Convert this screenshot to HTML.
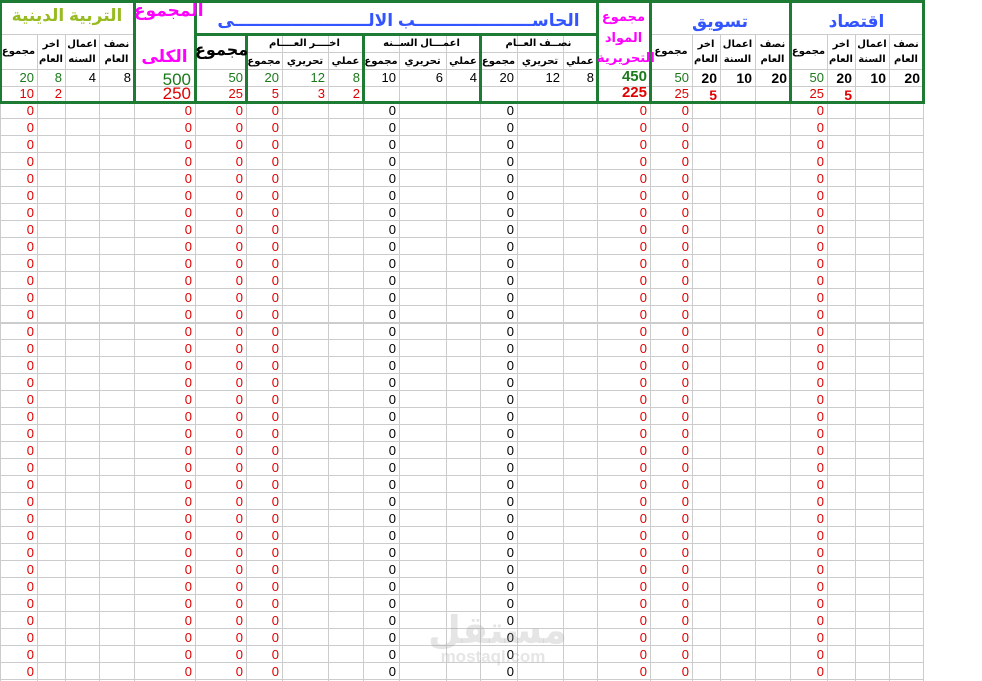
<!DOCTYPE html>
<html><head><meta charset="utf-8"><style>
body{margin:0;width:982px;height:681px;overflow:hidden;background:#fff;font-family:"Liberation Sans","DejaVu Sans",sans-serif;position:relative}
.l{position:absolute;background:#cccccc}
.g{position:absolute;background:#1e7b34}
.t{position:absolute;white-space:nowrap;line-height:1}
.c{position:absolute;text-align:center;font-weight:bold;font-size:10px;line-height:15px;direction:rtl}
</style></head><body>
<script>
const X=[0,37,65,99,134,195,246,282,328,363,399,446,480,517,563,597,650,692,720,755,790,827,855,889,923];
let h='';
function L(x,y,w,hh,cls){h+=`<div class="${cls||'l'}" style="left:${x}px;top:${y}px;width:${w}px;height:${hh}px"></div>`;}
function T(x,y,w,txt,st){h+=`<div class="t" style="left:${x}px;top:${y}px;width:${w}px;${st}">${txt}</div>`;}
for(const x of X){L(x,34,1,647);}
L(0,34,134,1);L(246,52,351,1);L(650,34,140,1);L(790,34,133,1);
L(0,69,923,1);L(0,86,923,1);
for(let k=1;k<=34;k++){let y=101+17*k;L(0,y,923,k==13?2:1);}
L(0,0,923,3,'g');L(0,101,923,3,'g');
for(const x of [0,134,195,597,650,790,923])L(x-1,0,3,104,'g');
for(const x of [246,363,480])L(x-1,34,3,70,'g');
L(195,33,402,3,'g');
T(0,7,134,'التربية الدينية','text-align:center;color:#99bb22;font-weight:bold;font-size:17px');
T(134,2,61,'المجموع','text-align:center;color:#ff00ff;font-weight:bold;font-size:17px');
T(134,48,61,'الكلى','text-align:center;color:#ff00ff;font-weight:bold;font-size:17px');
T(200,12,397,'الحاســــــــــــــــــــب الالـــــــــــــــــــــــي','text-align:center;color:#3355ff;font-weight:bold;font-size:17px;direction:rtl;overflow:hidden');
T(597,10,53,'مجموع','text-align:center;color:#ff00ff;font-weight:bold;font-size:13px');
T(597,31,53,'المواد','text-align:center;color:#ff00ff;font-weight:bold;font-size:13px');
T(597,51,53,'التحريرية','text-align:center;color:#ff00ff;font-weight:bold;font-size:13px');
T(650,13,140,'تسويق','text-align:center;color:#3355ff;font-weight:bold;font-size:17px');
T(790,13,133,'اقتصاد','text-align:center;color:#3355ff;font-weight:bold;font-size:17px');
T(195,43,51,'مجموع','text-align:center;font-weight:bold;font-size:16px');
T(246,39,117,'اخــــر العــــام','text-align:center;font-weight:bold;font-size:10px');
T(363,39,117,'اعمـــال الســنه','text-align:center;font-weight:bold;font-size:10px');
T(480,39,117,'نصــف العــام','text-align:center;font-weight:bold;font-size:10px');
function C(i,txt,y0){h+=`<div class="c" style="left:${X[i]}px;top:${y0}px;width:${X[i+1]-X[i]}px">${txt}</div>`;}
C(0,'مجموع',44);C(1,'اخر<br>العام',37);C(2,'اعمال<br>السنه',37);C(3,'نصف<br>العام',37);
const sub=['مجموع','تحريري','عملي'];for(let j=0;j<9;j++)C(6+j,sub[j%3],54);
C(16,'مجموع',44);C(17,'اخر<br>العام',37);C(18,'اعمال<br>السنة',37);C(19,'نصف<br>العام',37);
C(20,'مجموع',44);C(21,'اخر<br>العام',37);C(22,'اعمال<br>السنة',37);C(23,'نصف<br>العام',37);
function V(i,y,txt,col,fs,b){h+=`<div class="t" style="left:${X[i]}px;top:${y}px;width:${X[i+1]-X[i]-3}px;text-align:right;color:${col};font-size:${fs||13}px;${b?'font-weight:bold':''}">${txt}</div>`;}
const G='#1a7a1a',R='#e00000',K='#000';
V(0,71,'20',G);V(1,71,'8',G);V(2,71,'4',K);V(3,71,'8',K);
V(0,87,'10',R);V(1,87,'2',R);
h+=`<div class="t" style="left:134px;top:71px;width:57px;text-align:right;color:${G};font-size:17px">500</div>`;
h+=`<div class="t" style="left:134px;top:85px;width:57px;text-align:right;color:${R};font-size:17px">250</div>`;
V(5,71,'50',G);V(5,87,'25',R);
V(6,71,'20',G);V(7,71,'12',G);V(8,71,'8',G);V(6,87,'5',R);V(7,87,'3',R);V(8,87,'2',R);
V(9,71,'10',K);V(10,71,'6',K);V(11,71,'4',K);
V(12,71,'20',K);V(13,71,'12',K);V(14,71,'8',K);
V(15,69,'450',G,15,1);V(15,85,'225',R,15,1);
V(16,71,'50',G);V(17,71,'20',K,14,1);V(18,71,'10',K,14,1);V(19,71,'20',K,14,1);
V(16,87,'25',R);V(17,88,'5',R,14,1);
V(20,71,'50',G);V(21,71,'20',K,14,1);V(22,71,'10',K,14,1);V(23,71,'20',K,14,1);
V(20,87,'25',R);V(21,88,'5',R,14,1);
const zc=[[0,R],[4,R],[5,R],[6,R],[9,K],[12,K],[15,R],[16,R],[20,R]];
for(let k=0;k<34;k++){let y=104+17*k;for(const [i,c] of zc)V(i,y,'0',c,13);}
h+=`<div class="t" style="left:428px;top:612px;width:130px;text-align:center;color:rgba(150,150,150,.25);font-size:38px;font-weight:bold">مستقل</div>`;
h+=`<div class="t" style="left:428px;top:648px;width:130px;text-align:center;color:rgba(150,150,150,.25);font-size:17px;font-weight:bold">mostaql.com</div>`;
document.write(h);
</script>
</body></html>
